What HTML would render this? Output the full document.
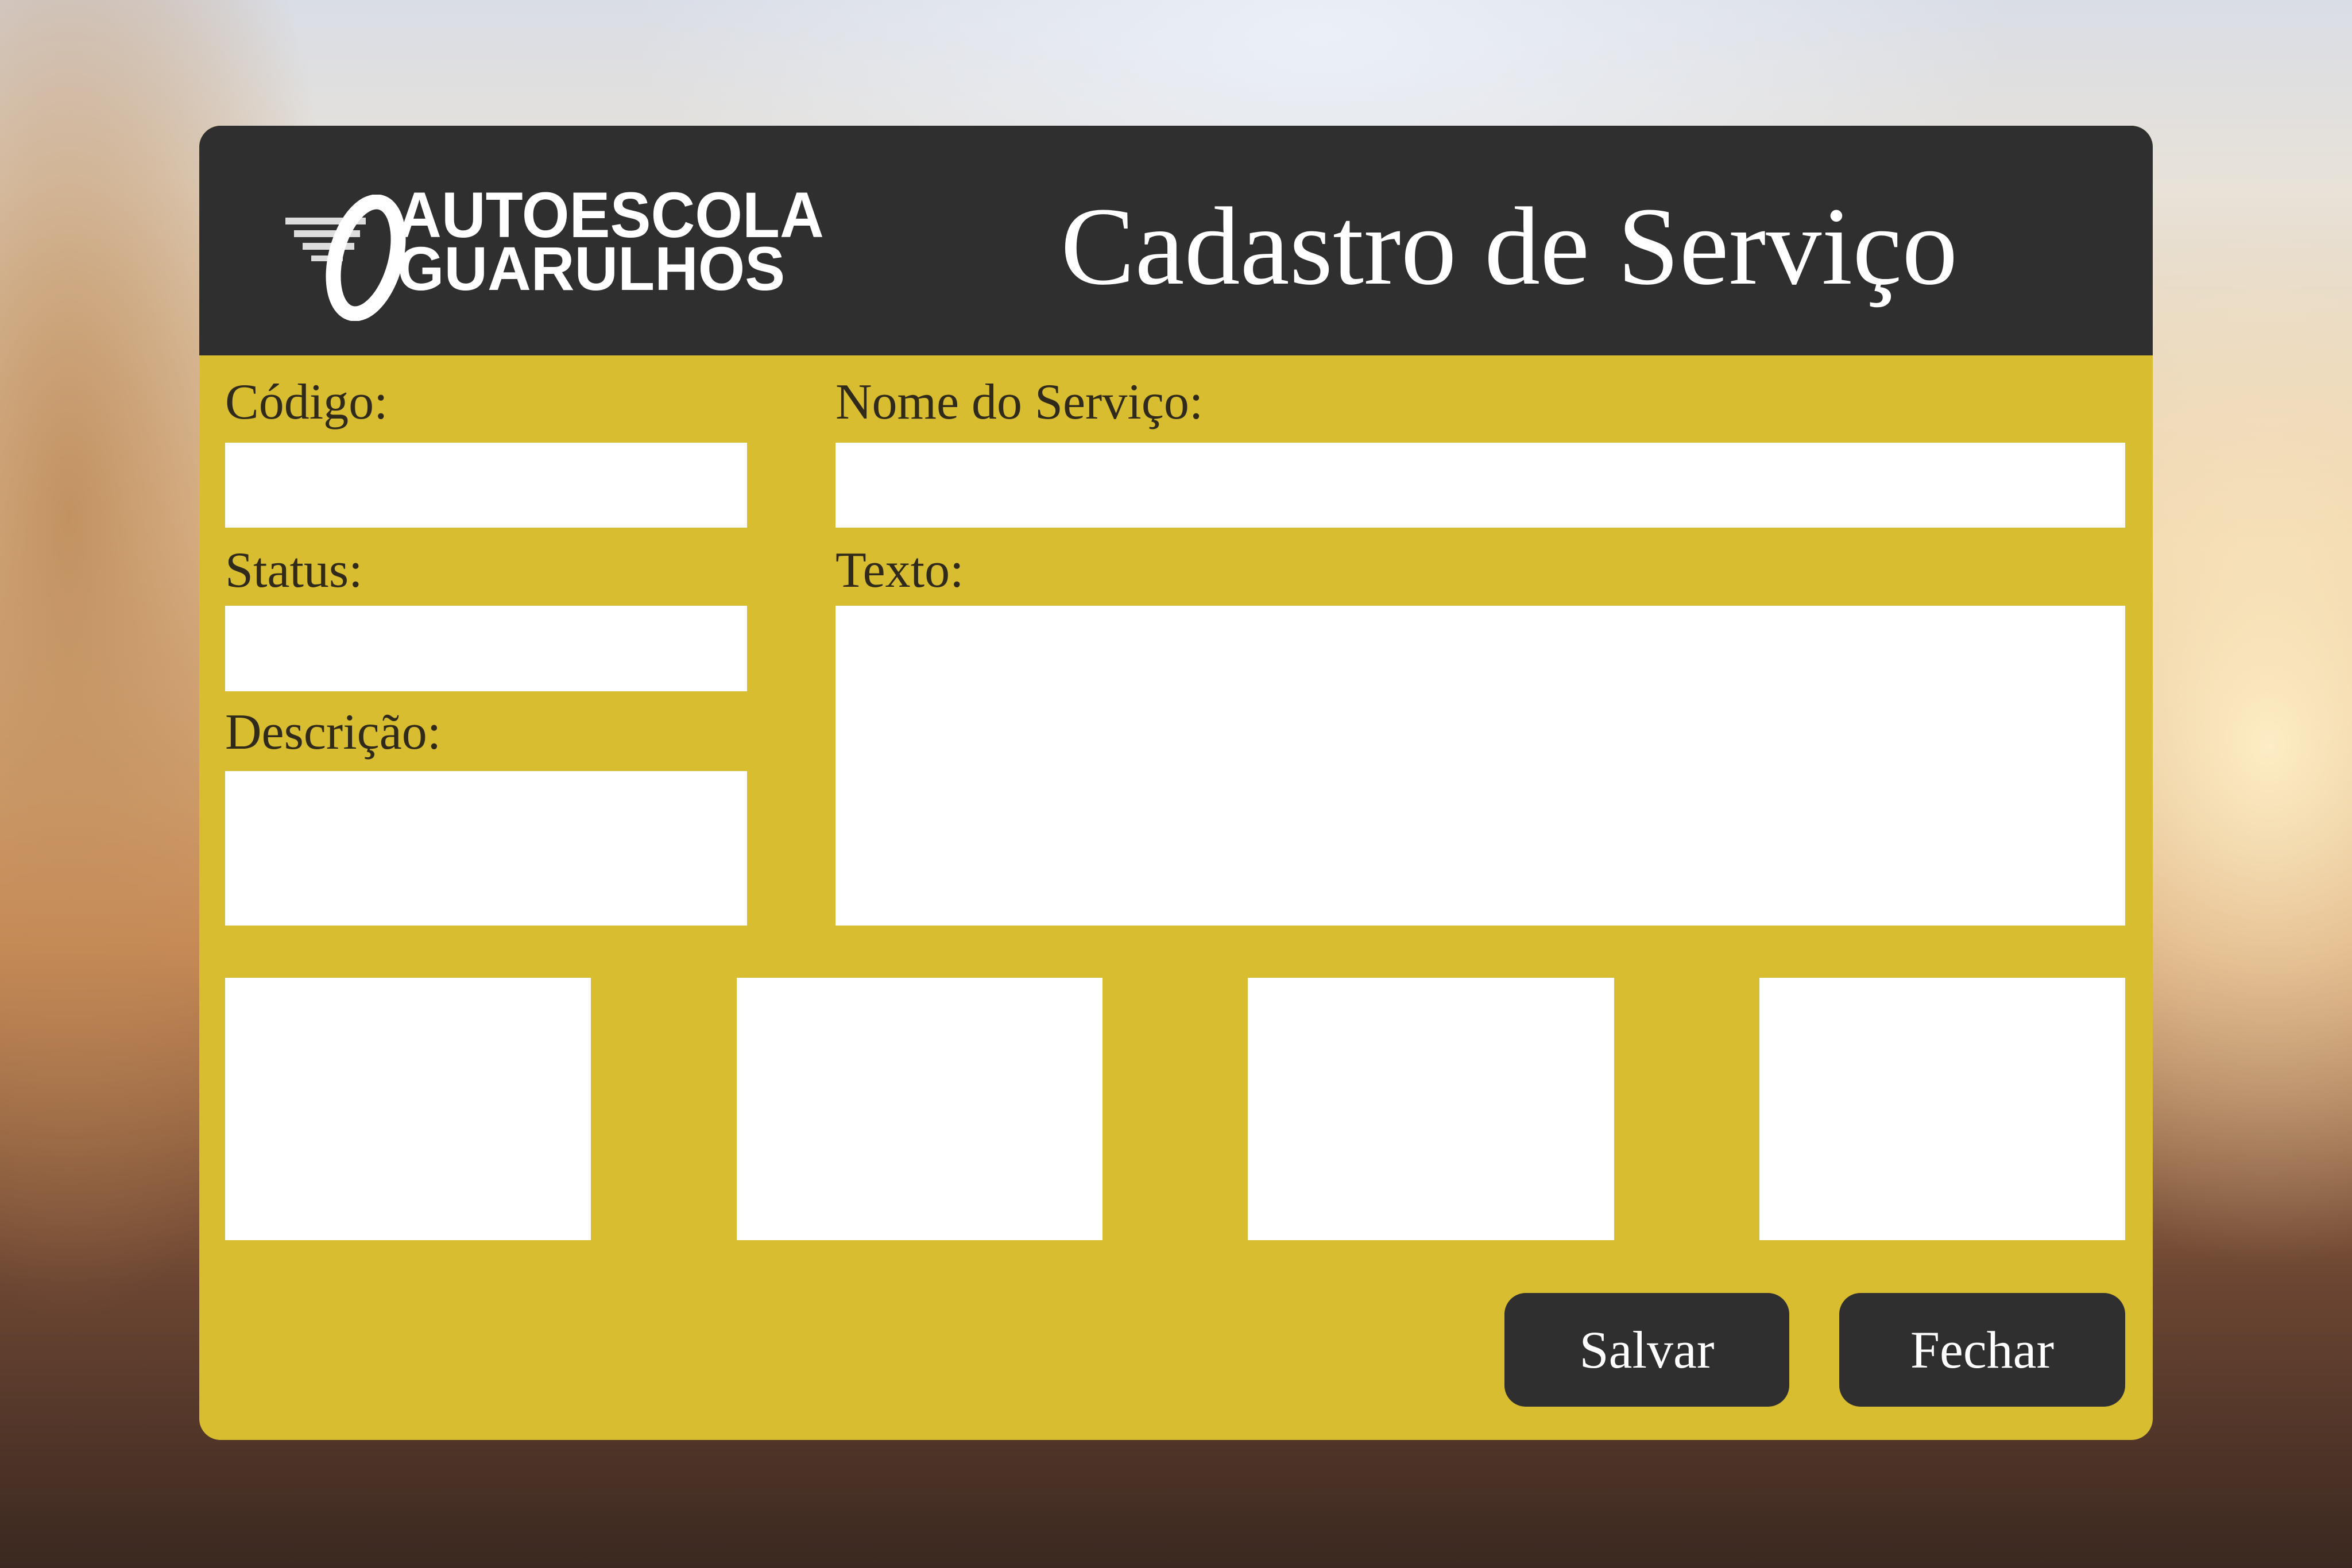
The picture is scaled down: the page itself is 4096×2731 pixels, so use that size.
<!DOCTYPE html>
<html><head><meta charset="utf-8"><style>
html,body{margin:0;padding:0;}
body{width:4096px;height:2731px;position:relative;overflow:hidden;font-family:"Liberation Serif",serif;
background:
radial-gradient(ellipse 700px 900px at 3950px 1300px, rgba(255,240,200,0.95), rgba(255,200,120,0) 100%),
radial-gradient(ellipse 1200px 500px at 2300px 60px, rgba(235,240,248,1), rgba(235,240,248,0) 100%),
radial-gradient(ellipse 500px 1400px at 120px 900px, rgba(190,140,90,0.9), rgba(190,140,90,0) 100%),
linear-gradient(180deg,#d9dde6 0%,#e8e2d8 12%,#e9c9a0 35%,#c98a55 60%,#6b4532 82%,#3a2820 100%);}
.card{position:absolute;left:347px;top:219px;width:3402px;height:2289px;border-radius:37px;background:#d9bd30;overflow:hidden;}
.hdr{position:absolute;left:0;top:0;width:100%;height:400px;background:#2f2f2f;}
.title{position:absolute;left:1500px;top:98px;color:#fff;font-size:194px;white-space:nowrap;}
.lbl{position:absolute;color:#2f2a1a;font-size:88px;white-space:nowrap;line-height:1;}
.w{position:absolute;background:#fff;}
.btn{position:absolute;background:#2f2f2f;color:#fff;border-radius:37px;font-size:92px;text-align:center;line-height:198px;}
.logo{position:absolute;color:#fff;font-family:"Liberation Sans",sans-serif;font-weight:bold;line-height:1;white-space:nowrap;transform-origin:0 0;}
</style></head><body>
<div class="card">
 <div class="hdr">
  <svg style="position:absolute;left:150px;top:120px" width="250" height="220" viewBox="0 0 250 220">
   <rect x="0" y="40" width="140" height="12" fill="#ddd"/>
   <rect x="15" y="62" width="115" height="12" fill="#ddd"/>
   <rect x="30" y="84" width="90" height="12" fill="#ddd"/>
   <rect x="45" y="106" width="55" height="10" fill="#ddd"/>
   <ellipse cx="140" cy="110" rx="52" ry="100" transform="rotate(15 140 110)" fill="none" stroke="#fff" stroke-width="26"/>
  </svg>
  <div class="logo" style="left:345px;top:100px;font-size:112px;transform:scaleX(0.95);">AUTOESCOLA</div>
  <div class="logo" style="left:345px;top:195px;font-size:108px;transform:scaleX(0.97);">GUARULHOS</div>
  <div class="title">Cadastro de Serviço</div>
 </div>
 <div class="lbl" style="left:45px;top:438px">Código:</div>
 <div class="lbl" style="left:1108px;top:438px">Nome do Serviço:</div>
 <div class="w" style="left:45px;top:552px;width:909px;height:148px"></div>
 <div class="w" style="left:1108px;top:552px;width:2246px;height:148px"></div>
 <div class="lbl" style="left:45px;top:731px">Status:</div>
 <div class="lbl" style="left:1108px;top:731px">Texto:</div>
 <div class="w" style="left:45px;top:836px;width:909px;height:149px"></div>
 <div class="w" style="left:1108px;top:836px;width:2246px;height:557px"></div>
 <div class="lbl" style="left:45px;top:1013px">Descrição:</div>
 <div class="w" style="left:45px;top:1124px;width:909px;height:269px"></div>
 <div class="w" style="left:45px;top:1484px;width:637px;height:457px"></div>
 <div class="w" style="left:936px;top:1484px;width:637px;height:457px"></div>
 <div class="w" style="left:1826px;top:1484px;width:638px;height:457px"></div>
 <div class="w" style="left:2717px;top:1484px;width:637px;height:457px"></div>
 <div class="btn" style="left:2273px;top:2033px;width:496px;height:198px">Salvar</div>
 <div class="btn" style="left:2856px;top:2033px;width:498px;height:198px">Fechar</div>
</div>
</body></html>
